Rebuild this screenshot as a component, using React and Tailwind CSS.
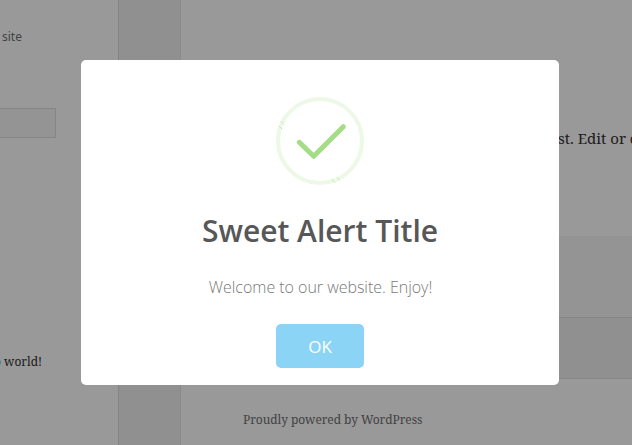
function SuccessIcon() {
  return (
    <svg className="mt-[37px] block h-[88px] w-[88px] shrink-0" viewBox="0 0 88 88" fill="none">
      <circle cx="44" cy="44" r="42" stroke="#edf8e7" strokeWidth="4" />
      <path d="M23.3 45.3L37.7 59.3L67.3 29.7" stroke="#a5dc86" strokeWidth="5" strokeLinecap="round" strokeLinejoin="round" />
      <path d="M5 24.5L8 27.5M3 29L6 32M56 82.5L59 85.5M61 80.5L64 83.5" stroke="#a5dc86" strokeWidth="0.9" strokeDasharray="1 0.5" />
    </svg>
  );
}

function Sidebar() {
  return (
    <aside className="flex w-[118px] shrink-0 flex-col overflow-hidden bg-white">
      <p className="mt-[27px] pl-[2px] font-['Noto_Sans',sans-serif] text-[12px] leading-5 text-[#707070]">site</p>
      <div className="mt-[61px] h-[30px] w-14 border border-l-0 border-[#dfdfdf] bg-[#f7f7f7]" />
      <p className="mt-[214px] -ml-[6px] whitespace-nowrap font-['Noto_Serif','Droid_Serif','DejaVu_Serif_Condensed','DejaVu_Serif',serif] text-[12px] leading-5 text-[#333]">
        <span className="text-[#2f7fb0]">o</span> world!
      </p>
    </aside>
  );
}

function Page() {
  return (
    <div className="flex h-full">
      <Sidebar />
      <div className="w-[63px] shrink-0 border-x border-l-[#dcdcdc] border-r-[#e7e7e7] bg-[#f1f1f1]" />
      <main className="flex min-w-0 flex-1 flex-col bg-white font-['Noto_Serif','Droid_Serif','DejaVu_Serif_Condensed','DejaVu_Serif',serif]">
        <p className="h-[236px] whitespace-nowrap pl-[377px] pt-[125px] text-[15px] leading-[26px] text-[#333]">st. Edit or d</p>
        <div className="h-[81px] bg-[#f7f7f7]" />
        <div className="h-[62px] border-y border-[#dfdfdf] bg-[#f1f1f1]" />
        <footer className="pl-[62px] pt-[31px] text-[12px] leading-5 tracking-[-0.06px] text-[#707070]">Proudly powered by WordPress</footer>
      </main>
    </div>
  );
}

export default function App() {
  return (
    <div className="relative h-[445px] w-[632px] overflow-hidden">
      <Page />
      <div className="absolute inset-0 bg-black/40 pl-[81px] pt-[60px]">
        <section role="dialog" className="flex h-[325px] w-[478px] flex-col items-center rounded-[5px] bg-white font-['Open_Sans',sans-serif]">
          <SuccessIcon />
          <h2 className="mt-[26px] text-[30px] font-semibold leading-10 text-[#575757]">Sweet Alert Title</h2>
          <p className="mt-6 pl-px text-[16px] font-light leading-6 tracking-[-0.03px] text-[#797979]">Welcome to our website. Enjoy!</p>
          <button className="mt-[25px] h-11 w-[88px] rounded-[5px] bg-[#8cd4f5] pt-px text-[17px] leading-[44px] text-white">OK</button>
        </section>
      </div>
    </div>
  );
}
